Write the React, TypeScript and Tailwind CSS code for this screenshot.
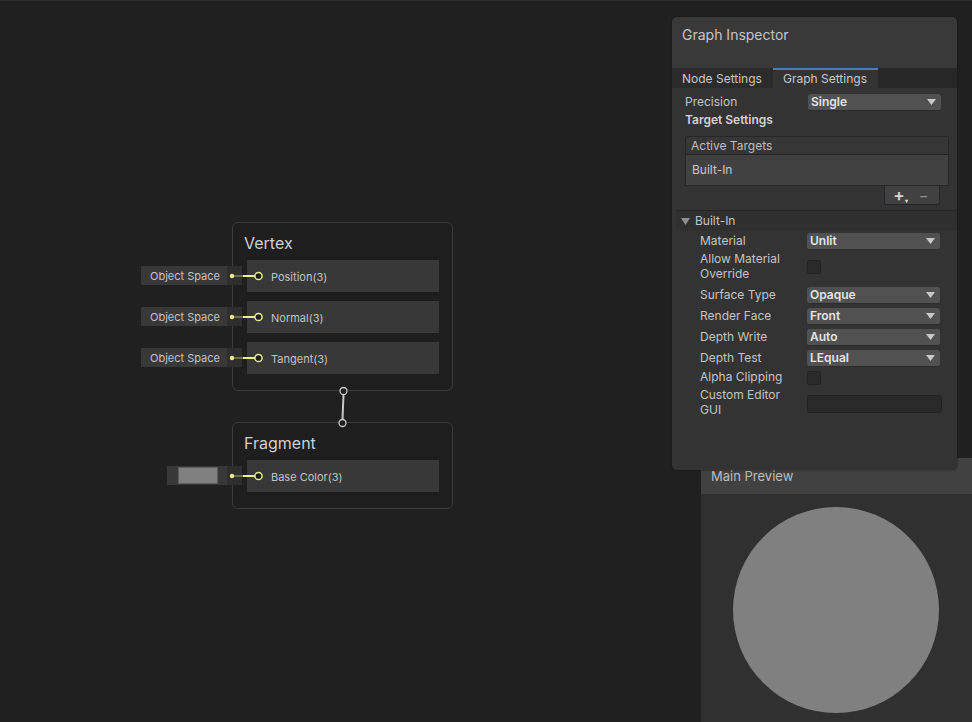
import React from 'react';

const YELLOW = '#e9ef8f';

function PortLink() {
  // dot on the input field, the short wire and the port ring
  return (
    <svg className="absolute left-[-20px] top-0" width="40" height="32" viewBox="0 0 40 32">
      <line x1="5" y1="16" x2="16" y2="16" stroke="#6b6b4a" strokeWidth="2" />
      <line x1="16" y1="16" x2="28" y2="16" stroke={YELLOW} strokeWidth="2" />
      <circle cx="5" cy="16" r="2.2" fill={YELLOW} />
      <circle cx="31.5" cy="16" r="3.6" fill="#1e1e1e" stroke={YELLOW} strokeWidth="1.5" />
    </svg>
  );
}

function PortRow({ label, input }: { label: string; input: React.ReactNode }) {
  return (
    <div className="relative h-[32px] w-[192px] bg-[#383838] flex items-center pl-[24px]">
      <div className="absolute right-[calc(100%+5px)] top-[6px] h-[19px] flex">{input}</div>
      <PortLink />
      <span className="text-[11px] text-[#c2c2c2] pt-[3px]">{label}</span>
    </div>
  );
}

function ObjectSpace() {
  return (
    <>
      <div className="w-[86px] h-full bg-[#383838] flex items-center pl-[9px] pt-[1px] text-[11px] text-[#c4c4c4]">Object Space</div>
      <div className="w-[15px] h-full bg-[#2e2e2e]" />
    </>
  );
}

function ColorInput() {
  return (
    <>
      <div className="w-[60px] h-full bg-[#383838] flex items-center pl-[11px]">
        <div className="w-[40px] h-[17px] bg-[#808080] border border-[#5c5c5c]" />
      </div>
      <div className="w-[15px] h-full bg-[#2e2e2e]" />
    </>
  );
}

function Node({ title, top, children }: { title: string; top: string; children: React.ReactNode }) {
  return (
    <div className={`absolute left-[232px] ${top} w-[221px] rounded-[6px] border border-[#3b3b3b] bg-[#1e1e1e] pl-[14px] pb-[16px]`}>
      <div className="h-[37px] pt-[10px] text-[16px] leading-[20px] text-[#d0d0d0] -ml-[3px]">{title}</div>
      <div className="flex flex-col gap-[9px]">{children}</div>
    </div>
  );
}

function Dropdown({ value }: { value: string }) {
  return (
    <div className="w-[133px] h-[17px] rounded-[3px] bg-[#515151] border-b border-[#2c2c2c] flex items-center justify-between pl-[3px] pr-[5px]">
      <span className="text-[12px] font-semibold text-[#e4e4e4]">{value}</span>
      <svg width="9" height="6" viewBox="0 0 9 6">
        <path d="M0 0H9L4.5 6Z" fill="#c8c8c8" />
      </svg>
    </div>
  );
}

function Checkbox() {
  return <div className="w-[14px] h-[14px] rounded-[2px] bg-[#2a2a2a] border border-[#222]" />;
}

type Prop = { label: string; kind: 'drop' | 'check' | 'field'; value?: string; mt: string; h: string };

const props: Prop[] = [
  { label: 'Material', kind: 'drop', value: 'Unlit', mt: 'mt-[2px]', h: 'h-[17px]' },
  { label: 'Allow Material Override', kind: 'check', mt: 'mt-[1px]', h: 'h-[31px]' },
  { label: 'Surface Type', kind: 'drop', value: 'Opaque', mt: 'mt-[5px]', h: 'h-[17px]' },
  { label: 'Render Face', kind: 'drop', value: 'Front', mt: 'mt-[4px]', h: 'h-[17px]' },
  { label: 'Depth Write', kind: 'drop', value: 'Auto', mt: 'mt-[4px]', h: 'h-[17px]' },
  { label: 'Depth Test', kind: 'drop', value: 'LEqual', mt: 'mt-[4px]', h: 'h-[17px]' },
  { label: 'Alpha Clipping', kind: 'check', mt: 'mt-[1px]', h: 'h-[19px]' },
  { label: 'Custom Editor GUI', kind: 'field', mt: 'mt-0', h: 'h-[32px]' },
];

function GraphInspector() {
  return (
    <div className="absolute left-[672px] top-[17px] w-[285px] h-[453px] rounded-[5px] bg-[#333333] overflow-hidden shadow-[0_0_2px_rgba(0,0,0,0.6)] flex flex-col">
      <div className="h-[51px] shrink-0 bg-[#393939] pl-[10px] pt-[7px] text-[14px] text-[#c6c6c6]">Graph Inspector</div>
      <div className="h-[20px] shrink-0 bg-[#272727] flex text-[12px] text-[#c8c8c8]">
        <div className="w-[101px] bg-[#2b2b2b] flex items-center pl-[10px] pt-[1px]">Node Settings</div>
        <div className="w-[105px] bg-[#333333] border-t-2 border-[#3f7fc6] flex items-center pl-[10px] pb-[1px]">Graph Settings</div>
      </div>

      <div className="flex flex-col text-[12px] text-[#c4c4c4]">
        <div className="mt-[6px] h-[17px] flex items-center pl-[13px]">
          <span className="w-[123px] -mt-[1px]">Precision</span>
          <Dropdown value="Single" />
        </div>
        <div className="mt-[1px] h-[16px] flex items-center pl-[13px] font-semibold text-[#d2d2d2]">Target Settings</div>

        <div className="mt-[8px] ml-[13px] mr-[8px]">
          <div className="rounded-t-[3px] border border-[#262626] overflow-hidden">
            <div className="h-[18px] bg-[#363636] border-b border-[#232323] flex items-center pl-[5px] text-[#bdbdbd]">Active Targets</div>
            <div className="h-[30px] bg-[#414141] flex items-center pl-[6px] text-[#c8c8c8]">Built-In</div>
          </div>
          <div className="flex justify-end pr-[9px]">
            <div className="w-[56px] h-[19px] bg-[#414141] rounded-b-[3px] border border-t-0 border-[#262626] flex items-center justify-center gap-[14px] text-[#d6d6d6] pr-[2px]">
              <span className="relative text-[17px] font-semibold leading-none">
                +<span className="absolute right-[-3px] bottom-[0px] text-[6px]">▾</span>
              </span>
              <span className="text-[15px] leading-none text-[#8c8c8c]">−</span>
            </div>
          </div>
        </div>

        <div className="mt-[5px] ml-[4px] h-[21px] bg-[#2f2f2f] border-t border-[#262626] flex items-center pl-[5px] text-[#c4c4c4]">
          <svg width="9" height="7" viewBox="0 0 9 7" className="mr-[5px]">
            <path d="M0 0H9L4.5 7Z" fill="#8e8e8e" />
          </svg>
          Built-In
        </div>

        {props.map((p) => (
          <div key={p.label} className={`${p.mt} ${p.h} flex items-center pl-[28px]`}>
            <span className="w-[100px] mr-[7px] leading-[15px] -mt-[2px]">{p.label}</span>
            {p.kind === 'drop' && <Dropdown value={p.value ?? ''} />}
            {p.kind === 'check' && <Checkbox />}
            {p.kind === 'field' && (
              <div className="w-[135px] h-[18px] rounded-[3px] bg-[#2a2a2a] border border-[#212121] mt-[2px]" />
            )}
          </div>
        ))}
      </div>
    </div>
  );
}

function MainPreview() {
  return (
    <div className="absolute left-[701px] top-[458px] right-0 bottom-0 rounded-tl-[5px] bg-[#303030] overflow-hidden flex flex-col">
      <div className="h-[36px] shrink-0 bg-[#414141] flex items-center pl-[10px] pt-[2px] text-[13px] text-[#bcbcbc]">Main Preview</div>
      <div className="pl-[32px] pt-[13px]">
        <div className="w-[206px] h-[206px] rounded-full bg-[#808080]" />
      </div>
    </div>
  );
}

export default function App() {
  return (
    <div
      className="relative w-[972px] h-[722px] overflow-hidden bg-[#202020]"
      style={{ fontFamily: 'Inter, "Noto Sans", sans-serif' }}
    >
      <div className="absolute top-0 left-0 right-0 h-px bg-[#303030]" />

      <Node title="Vertex" top="top-[222px]">
        <PortRow label="Position(3)" input={<ObjectSpace />} />
        <PortRow label="Normal(3)" input={<ObjectSpace />} />
        <PortRow label="Tangent(3)" input={<ObjectSpace />} />
      </Node>

      <Node title="Fragment" top="top-[422px]">
        <PortRow label="Base Color(3)" input={<ColorInput />} />
      </Node>

      <svg className="absolute left-[335px] top-[384px]" width="16" height="46" viewBox="0 0 16 46">
        <path d="M8.5 7 C 8.5 20, 7.5 26, 7.5 39" fill="none" stroke="#c8c8c8" strokeWidth="2" />
        <circle cx="8.5" cy="7" r="3.5" fill="#202020" stroke="#c8c8c8" strokeWidth="1.3" />
        <circle cx="7.5" cy="39" r="3.5" fill="#202020" stroke="#c8c8c8" strokeWidth="1.3" />
      </svg>

      <MainPreview />
      <GraphInspector />
    </div>
  );
}
